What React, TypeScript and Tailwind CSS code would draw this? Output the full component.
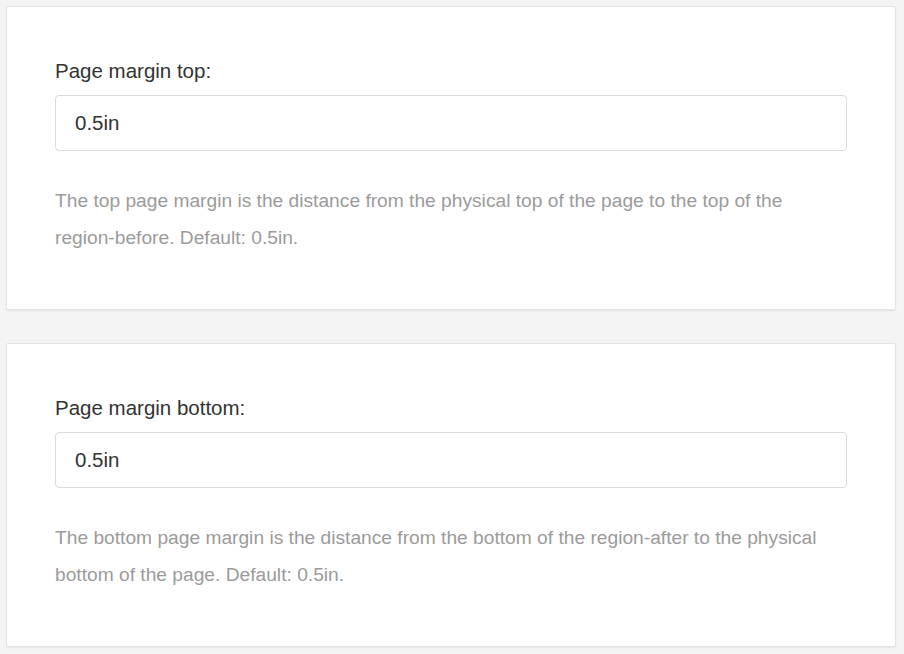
import React from 'react';

type Field = {
  id: string;
  label: string;
  value: string;
  help: string;
};

const FIELDS: Field[] = [
  {
    id: 'page-margin-top',
    label: 'Page margin top:',
    value: '0.5in',
    help: 'The top page margin is the distance from the physical top of the page to the top of the region-before. Default: 0.5in.',
  },
  {
    id: 'page-margin-bottom',
    label: 'Page margin bottom:',
    value: '0.5in',
    help: 'The bottom page margin is the distance from the bottom of the region-after to the physical bottom of the page. Default: 0.5in.',
  },
];

function SettingCard({ field }: { field: Field }) {
  return (
    <section className="bg-white border border-[#e3e3e3] rounded-[2px] shadow-[0_1px_2px_rgba(0,0,0,0.06)] px-[48px] pt-[52px] pb-[53px]">
      <label htmlFor={field.id} className="block text-[20.5px] leading-[24px] text-[#333333]">
        {field.label}
      </label>
      <input
        id={field.id}
        type="text"
        defaultValue={field.value}
        className="mt-[12px] block w-full h-[56px] px-[19px] border border-[#dadada] rounded-[4px] bg-white text-[20.5px] text-[#333333] outline-none"
      />
      <p className="mt-[31px] text-[19.2px] leading-[37px] text-[#9b9b9b]">{field.help}</p>
    </section>
  );
}

export default function App() {
  return (
    <div
      className="min-h-screen bg-[#f4f4f4] pl-[6px] pr-[8px] pt-[6px] pb-[7px] flex flex-col gap-[33px]"
      style={{ fontFamily: '"Liberation Sans", Arial, sans-serif' }}
    >
      {FIELDS.map((f) => (
        <SettingCard key={f.id} field={f} />
      ))}
    </div>
  );
}
